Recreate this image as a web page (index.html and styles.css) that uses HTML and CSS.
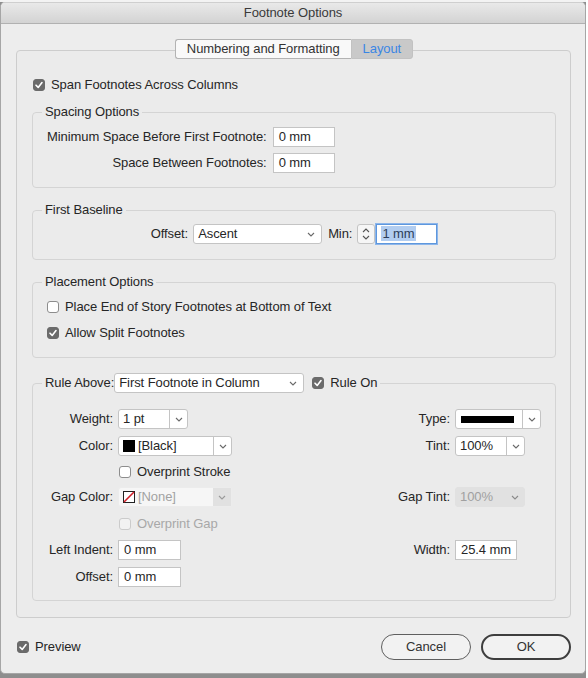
FILE: index.html
```html
<!DOCTYPE html>
<html lang="en">
<head>
<meta charset="utf-8">
<title>Footnote Options</title>
<link rel="stylesheet" href="styles.css">
</head>
<body>
<div class="screen">
  <div class="dialog-col">
    <div class="top-strip"></div>
    <div class="dialog">
      <div class="titlebar">Footnote Options</div>
      <div class="content">
        <div class="panel">
          <div class="tabs">
            <span class="tab tab-first">Numbering and Formatting</span>
            <span class="tab tab-active">Layout</span>
          </div>

          <div class="check-row span-row">
            <span class="cb cb-on"><svg width="10" height="10" viewBox="0 0 10 10"><path d="M2 5.2 L4.2 7.4 L8 2.6" fill="none" stroke="#fff" stroke-width="1.6" stroke-linecap="round" stroke-linejoin="round"/></svg></span>
            <span>Span Footnotes Across Columns</span>
          </div>

          <fieldset class="group group-spacing">
            <legend class="legend">Spacing Options</legend>
            <div class="spacing-body">
              <span class="lbl">Minimum Space Before First Footnote:</span><span class="field w62">0 mm</span>
              <span class="lbl">Space Between Footnotes:</span><span class="field w62">0 mm</span>
            </div>
          </fieldset>

          <fieldset class="group">
            <legend class="legend">First Baseline</legend>
            <div class="baseline-body">
              <span class="lbl">Offset:</span>
              <span class="select select-offset"><span class="select-text">Ascent</span><svg width="8" height="5" viewBox="0 0 8 5"><path d="M1 1 L4 4 L7 1" fill="none" stroke="#6a6a6a" stroke-width="1.1"/></svg></span>
              <span class="lbl min-lbl">Min:</span>
              <span class="stepper"><svg width="8" height="16" viewBox="0 0 8 16"><path d="M1 6 L4 3 L7 6" fill="none" stroke="#555" stroke-width="1.1"/><path d="M1 10 L4 13 L7 10" fill="none" stroke="#555" stroke-width="1.1"/></svg></span>
              <span class="field field-focus"><span class="sel">1 mm</span></span>
            </div>
          </fieldset>

          <fieldset class="group">
            <legend class="legend">Placement Options</legend>
            <div class="placement-body">
              <div class="check-row"><span class="cb"></span><span>Place End of Story Footnotes at Bottom of Text</span></div>
              <div class="check-row"><span class="cb cb-on"><svg width="10" height="10" viewBox="0 0 10 10"><path d="M2 5.2 L4.2 7.4 L8 2.6" fill="none" stroke="#fff" stroke-width="1.6" stroke-linecap="round" stroke-linejoin="round"/></svg></span><span>Allow Split Footnotes</span></div>
            </div>
          </fieldset>

          <fieldset class="group group-rule">
            <legend class="legend legend-rule">
              <span class="lbl">Rule Above:</span>
              <span class="select select-rule"><span class="select-text">First Footnote in Column</span><svg width="8" height="5" viewBox="0 0 8 5"><path d="M1 1 L4 4 L7 1" fill="none" stroke="#6a6a6a" stroke-width="1.1"/></svg></span>
              <span class="check-row rule-on"><span class="cb cb-on"><svg width="10" height="10" viewBox="0 0 10 10"><path d="M2 5.2 L4.2 7.4 L8 2.6" fill="none" stroke="#fff" stroke-width="1.6" stroke-linecap="round" stroke-linejoin="round"/></svg></span><span>Rule On</span></span>
            </legend>
            <div class="rule-grid">
              <span class="lbl c1">Weight:</span>
              <span class="combo c2 w70"><span class="combo-text">1 pt</span><span class="combo-btn"><svg width="8" height="5" viewBox="0 0 8 5"><path d="M1 1 L4 4 L7 1" fill="none" stroke="#6a6a6a" stroke-width="1.1"/></svg></span></span>
              <span class="lbl c4">Type:</span>
              <span class="combo c5 w86"><span class="combo-text"><span class="type-bar"></span></span><span class="combo-btn"><svg width="8" height="5" viewBox="0 0 8 5"><path d="M1 1 L4 4 L7 1" fill="none" stroke="#6a6a6a" stroke-width="1.1"/></svg></span></span>

              <span class="lbl c1">Color:</span>
              <span class="combo c2 w114"><span class="combo-text"><span class="swatch-black"></span>[Black]</span><span class="combo-btn"><svg width="8" height="5" viewBox="0 0 8 5"><path d="M1 1 L4 4 L7 1" fill="none" stroke="#6a6a6a" stroke-width="1.1"/></svg></span></span>
              <span class="lbl c4">Tint:</span>
              <span class="combo c5 w70"><span class="combo-text">100%</span><span class="combo-btn"><svg width="8" height="5" viewBox="0 0 8 5"><path d="M1 1 L4 4 L7 1" fill="none" stroke="#6a6a6a" stroke-width="1.1"/></svg></span></span>

              <span class="check-row c2 indent-check"><span class="cb"></span><span>Overprint Stroke</span></span>

              <span class="lbl c1">Gap Color:</span>
              <span class="combo combo-dis c2 w114"><span class="combo-text"><svg width="12" height="12" viewBox="0 0 12 12"><rect x="0.5" y="0.5" width="11" height="11" fill="#fff" stroke="#222"/><path d="M1 11 L11 1" stroke="#d0202a" stroke-width="1.6"/></svg>[None]</span><span class="combo-btn"><svg width="8" height="5" viewBox="0 0 8 5"><path d="M1 1 L4 4 L7 1" fill="none" stroke="#9a9a9a" stroke-width="1.1"/></svg></span></span>
              <span class="lbl c4">Gap Tint:</span>
              <span class="combo combo-dis-full c5 w70"><span class="combo-text">100%</span><span class="combo-btn"><svg width="8" height="5" viewBox="0 0 8 5"><path d="M1 1 L4 4 L7 1" fill="none" stroke="#8a8a8a" stroke-width="1.1"/></svg></span></span>

              <span class="check-row c2 indent-check disabled"><span class="cb cb-dis"></span><span>Overprint Gap</span></span>

              <span class="lbl c1">Left Indent:</span>
              <span class="field c2 w63">0 mm</span>
              <span class="lbl c4">Width:</span>
              <span class="field c5 w62">25.4 mm</span>

              <span class="lbl c1">Offset:</span>
              <span class="field c2 w63">0 mm</span>
            </div>
          </fieldset>
        </div>

        <div class="footer">
          <div class="check-row preview"><span class="cb cb-on"><svg width="10" height="10" viewBox="0 0 10 10"><path d="M2 5.2 L4.2 7.4 L8 2.6" fill="none" stroke="#fff" stroke-width="1.6" stroke-linecap="round" stroke-linejoin="round"/></svg></span><span>Preview</span></div>
          <div class="buttons">
            <span class="btn">Cancel</span>
            <span class="btn btn-default">OK</span>
          </div>
        </div>
      </div>
    </div>
  </div>
  <div class="doc-strip"></div>
</div>
</body>
</html>
```

FILE: styles.css
```css
* { box-sizing: border-box; }
html, body { margin: 0; padding: 0; }
body {
  width: 588px;
  height: 678px;
  overflow: hidden;
  background: #ffffff;
  font-family: "Liberation Sans", Arial, sans-serif;
  font-size: 13px;
  line-height: 16px;
  letter-spacing: -0.08px;
  color: #262626;
}
.screen { display: flex; width: 588px; height: 678px; }
.dialog-col {
  width: 586px;
  flex: none;
  display: flex;
  flex-direction: column;
  background: #8e8e8e;
}
.top-strip { height: 2px; background: #f3f3f3; flex: none; }
.doc-strip { flex: 1; background: #ffffff; }

.dialog {
  background: #ededed;
  border: 1px solid #a6a6a6;
  border-top-color: #cfcfcf;
  border-radius: 5px;
  overflow: hidden;
  flex: none;
}
.titlebar {
  height: 21px;
  border-bottom: 1px solid #b1b1b1;
  background: linear-gradient(#e9e9e9, #d3d3d3);
  text-align: center;
  line-height: 20px;
  color: #3a3a3a;
}
.content { padding: 26px 14px 13px 15px; }

.panel {
  border: 1px solid #cdcdcd;
  border-radius: 4px;
  background: #ebebeb;
  padding: 0 14px 16px 15px;
}
.tabs {
  display: flex;
  width: max-content;
  margin: -12px auto 0;
  height: 20px;
}
.tab {
  height: 20px;
  line-height: 18px;
  padding: 0 11px;
  border: 1px solid #b3b3b3;
  background: #f9f9f9;
  color: #333333;
}
.tab-first { border-radius: 3px 0 0 3px; border-right: none; }
.tab-active {
  background: #c9c9c9;
  border-color: #c2c2c2;
  color: #3a86e4;
  border-radius: 0 3px 3px 0;
}

.check-row { display: flex; align-items: center; gap: 6px; height: 16px; }
.cb {
  width: 12px;
  height: 12px;
  flex: none;
  border: 1px solid #8d8d8d;
  border-radius: 3px;
  background: #ffffff;
  display: flex;
  align-items: center;
  justify-content: center;
}
.cb-on { background: #6b6b6b; border-color: #6b6b6b; }
.cb-dis { border-color: #cbcbcb; background: #f2f2f2; }
.disabled { color: #a8a8a8; }
.span-row { margin: 18px 0 0 1px; }

.group {
  margin: 14px 0 0;
  padding: 0;
  border: 1px solid #d4d4d4;
  border-radius: 4px;
  min-width: 0;
}
.group-spacing { margin-top: 11px; }
.group-rule { margin-top: 15px; }
.legend {
  margin-left: 9px;
  padding: 0 3px;
  line-height: 16px;
}

.spacing-body {
  display: grid;
  grid-template-columns: auto 62px;
  column-gap: 6px;
  row-gap: 6px;
  justify-content: start;
  align-items: center;
  padding: 7px 0 14px 14px;
}
.lbl { text-align: right; white-space: nowrap; }

.field {
  display: block;
  height: 20px;
  border: 1px solid #c4c4c4;
  background: #ffffff;
  padding: 0 4px 0 5px;
  line-height: 18px;
  white-space: nowrap;
}
.w62 { width: 62px; }
.w63 { width: 63px; }
.w70 { width: 70px; }
.w86 { width: 86px; }
.w114 { width: 114px; }

.baseline-body {
  display: flex;
  align-items: center;
  justify-content: center;
  padding: 6px 0 15px;
}
.baseline-body .select-offset { margin-left: 5px; }
.min-lbl { margin-left: 6px; }
.stepper {
  margin-left: 5px;
  width: 18px;
  height: 20px;
  border: 1px solid #c4c4c4;
  border-radius: 3px;
  background: #f6f6f6;
  display: flex;
  align-items: center;
  justify-content: center;
}
.field-focus {
  margin-left: 1px;
  width: 61px;
  border-color: #5e97dd;
  box-shadow: 0 0 0 1px #8db6ea;
  padding-left: 4px;
}
.sel { background: #b2cdf0; color: #2d3d58; padding: 0 1px; }

.select {
  display: flex;
  align-items: center;
  height: 20px;
  border: 1px solid #c4c4c4;
  border-radius: 3px;
  background: #ffffff;
  padding: 0 6px 0 4px;
}
.select-text { flex: 1; white-space: nowrap; }
.select-offset { width: 129px; }
.select-rule { width: 190px; }

.placement-body {
  display: flex;
  flex-direction: column;
  gap: 10px;
  padding: 9px 0 16px 14px;
}

.legend-rule { display: flex; align-items: center; height: 20px; }
.rule-on { margin-left: 8px; }

.rule-grid {
  display: grid;
  grid-template-columns: 66px auto 1fr auto 86px;
  grid-template-rows: 20px 20px 17px 20px 19px 20px 20px;
  column-gap: 5px;
  row-gap: 7px;
  align-items: center;
  padding: 16px 14px 13px 14px;
}
.rule-grid .lbl { justify-self: end; }
.c1 { grid-column: 1; }
.c2 { grid-column: 2; justify-self: start; }
.c4 { grid-column: 4; }
.c5 { grid-column: 5; justify-self: start; }
.indent-check { margin-left: 1px; }

.combo {
  display: flex;
  height: 20px;
  border: 1px solid #c4c4c4;
  border-radius: 3px;
  background: #ffffff;
}
.combo-text {
  flex: 1;
  display: flex;
  align-items: center;
  gap: 3px;
  padding-left: 4px;
  white-space: nowrap;
  overflow: hidden;
}
.combo-btn {
  width: 18px;
  flex: none;
  border-left: 1px solid #c4c4c4;
  display: flex;
  align-items: center;
  justify-content: center;
}
.swatch-black { width: 12px; height: 12px; background: #000000; flex: none; }
.type-bar { width: 53px; height: 7px; background: #000000; margin-left: 1px; }

.combo-dis { border-color: #ececec; background: #f6f6f6; color: #a2a2a2; }
.combo-dis .combo-btn { background: #e1e1e1; border-left: none; }
.combo-dis-full { border-color: #e1e1e1; background: #e1e1e1; color: #a0a0a0; }
.combo-dis-full .combo-btn { border-left: none; }

.footer {
  display: flex;
  align-items: center;
  margin-top: 16px;
  height: 26px;
}
.preview { margin-left: 1px; }
.buttons { margin-left: auto; display: flex; gap: 10px; }
.btn {
  width: 90px;
  height: 26px;
  border-radius: 13px;
  border: 1px solid #5f5f5f;
  background: #f2f2f2;
  text-align: center;
  line-height: 24px;
  color: #333333;
}
.btn-default { border: 2px solid #3e3e3e; line-height: 22px; }
```
